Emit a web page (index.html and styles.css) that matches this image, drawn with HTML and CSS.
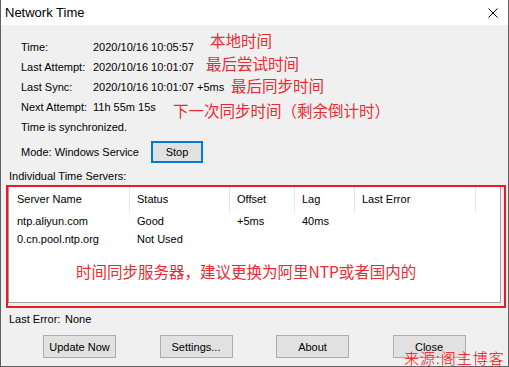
FILE: index.html
```html
<!DOCTYPE html>
<html lang="zh-CN">
<head>
  <meta charset="UTF-8" />
  <meta name="viewport" content="width=device-width, initial-scale=1.0"/>
  <title>Network Time</title>
  <link rel="stylesheet" href="styles.css">
</head>
<body>
  <div class="window">
    <div class="titlebar">
      <span class="title">Network Time</span>
      <svg class="close" width="10" height="10" viewBox="0 0 10 10">
        <path d="M0.5 0.5 L9.5 9.5 M9.5 0.5 L0.5 9.5" stroke="#000" stroke-width="1" fill="none"/>
      </svg>
    </div>

    <div class="content">
      <div class="info">
        <span>Time:</span><span>2020/10/16 10:05:57</span>
        <span>Last Attempt:</span><span>2020/10/16 10:01:07</span>
        <span>Last Sync:</span><span>2020/10/16 10:01:07 +5ms</span>
        <span>Next Attempt:</span><span>11h 55m 15s</span>
        <span class="full">Time is synchronized.</span>
      </div>

      <div class="mode">
        <span>Mode: Windows Service</span>
        <button class="btn focused">Stop</button>
      </div>

      <div class="section-label">Individual Time Servers:</div>

      <div class="servers">
        <div class="listview">
          <div class="row header">
            <span>Server Name</span>
            <span>Status</span>
            <span>Offset</span>
            <span>Lag</span>
            <span>Last Error</span>
            <span></span>
          </div>
          <div class="row">
            <span>ntp.aliyun.com</span>
            <span>Good</span>
            <span>+5ms</span>
            <span>40ms</span>
            <span></span>
            <span></span>
          </div>
          <div class="row">
            <span>0.cn.pool.ntp.org</span>
            <span>Not Used</span>
            <span></span>
            <span></span>
            <span></span>
            <span></span>
          </div>
        </div>
        <div class="note-box"></div>
        <div class="note in-list">时间同步服务器，建议更换为阿里NTP或者国内的</div>
      </div>

      <div class="last-error"><span>Last Error:</span><span>None</span></div>

      <div class="buttons">
        <button class="btn">Update Now</button>
        <button class="btn">Settings...</button>
        <button class="btn">About</button>
        <button class="btn">Close</button>
      </div>
    </div>

    <div class="note n-time">本地时间</div>
    <div class="note n-attempt">最后尝试时间</div>
    <div class="note n-sync">最后同步时间</div>
    <div class="note n-next">下一次同步时间（剩余倒计时）</div>
    <div class="watermark">来源:阁主博客</div>
  </div>
</body>
</html>
```

FILE: styles.css
```css
html, body { margin: 0; padding: 0; }
body {
  font-family: "Liberation Sans", Arial, sans-serif;
  font-size: 11px;
  color: #000;
  background: #3a3a3a;
}
.window {
  position: relative;
  width: 507px;
  height: 366px;
  background: #f0f0f0;
  border: 1px solid #5f5f5f;
  border-top: none;
  overflow: hidden;
}
.titlebar {
  height: 25px;
  background: #fff;
  display: flex;
  align-items: center;
  justify-content: space-between;
  padding: 0 10px 0 4px;
}
.title { font-size: 13px; line-height: 25px; }
.close { margin-top: 1px; }

.content { padding: 12px 4px 0 7px; }

.info {
  display: grid;
  grid-template-columns: 72px auto;
  grid-auto-rows: 20px;
  align-items: center;
  margin-left: 13px;
}
.info .full { grid-column: 1 / 3; }

.mode {
  display: grid;
  grid-template-columns: 130px auto;
  align-items: center;
  height: 22px;
  margin: 4px 0 0 13px;
}
.btn {
  font-family: "Liberation Sans", Arial, sans-serif;
  font-size: 11px;
  color: #000;
  background: #e1e1e1;
  border: 1px solid #adadad;
  width: 73px;
  height: 23px;
  padding: 0;
}
.btn.focused {
  width: 52px;
  height: 22px;
  border: 2px solid #0078d7;
}

.section-label {
  margin-top: 6px;
  line-height: 14px;
  padding-left: 1px;
}

.servers {
  position: relative;
  margin-top: 3px;
}
.listview {
  width: 491px;
  height: 115px;
  background: #fff;
  border: 1px solid #a0a0a0;
}
.row {
  display: grid;
  grid-template-columns: 121px 100px 65px 60px 121px 1fr;
  height: 18px;
  align-items: center;
}
.row span { padding-left: 8px; }
.row span + span { padding-left: 7px; }
.row.header { height: 25px; }
.row.header span {
  height: 25px;
  line-height: 25px;
  border-right: 1px solid #e5e5e5;
}
.row.header span:last-child { border-right: none; }

.note-box {
  position: absolute;
  left: -2px;
  top: -1px;
  width: 496px;
  height: 119px;
  border: 2px solid #e81c24;
}

.note {
  position: absolute;
  font-family: "Noto Sans CJK SC", sans-serif;
  font-size: 15.5px;
  line-height: 16px;
  color: #ea2a32;
  white-space: nowrap;
}
.n-time { left: 209px; top: 32px; }
.n-attempt { left: 205px; top: 55px; }
.n-sync { left: 230px; top: 77px; }
.n-next { left: 172px; top: 102px; }
.note.in-list { left: 68px; top: 77px; }

.last-error {
  margin-top: 9px;
  line-height: 14px;
  padding-left: 1px;
  display: grid;
  grid-template-columns: 56px auto;
}

.buttons {
  display: flex;
  gap: 43.5px;
  margin: 9px 0 0 35px;
}

.watermark {
  position: absolute;
  left: 403px;
  top: 350px;
  font-family: "Noto Sans CJK SC", sans-serif;
  font-size: 15px;
  font-weight: 300;
  letter-spacing: 1px;
  line-height: 16px;
  color: #ff0000;
  white-space: nowrap;
}
```
